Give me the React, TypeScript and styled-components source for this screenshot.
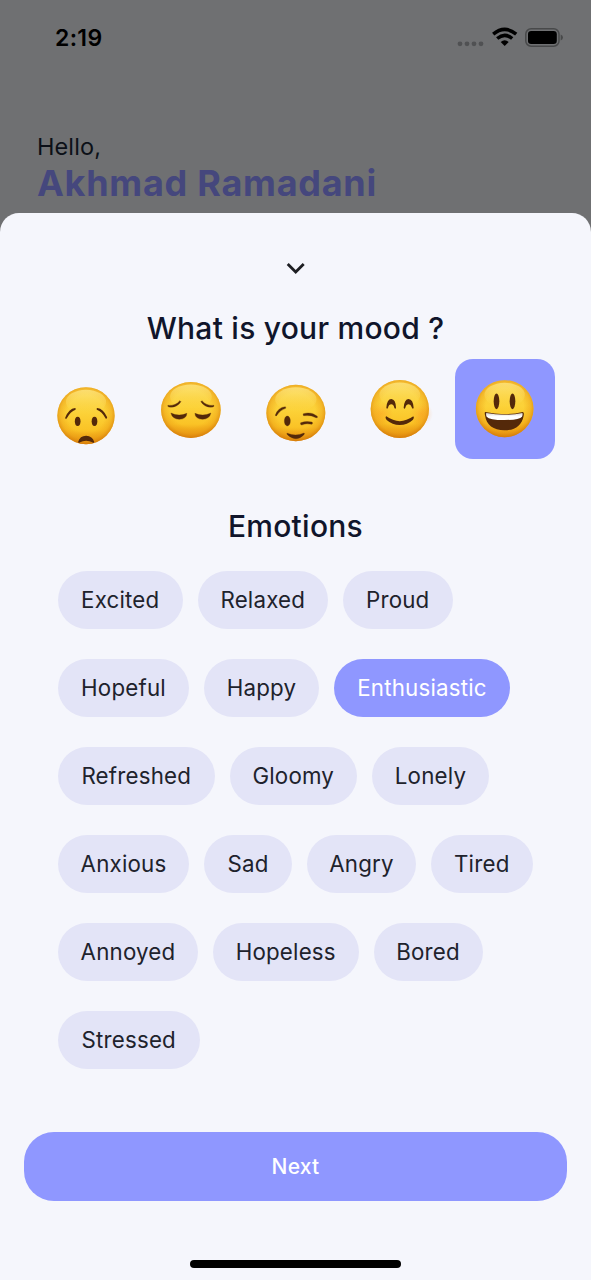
import React from "react";
import styled, { createGlobalStyle } from "styled-components";

const Global = createGlobalStyle`
  * { box-sizing: border-box; }
  body { margin: 0; background: #6f7072; font-family: Inter, "Liberation Sans", sans-serif; }
  button { font: inherit; border: 0; padding: 0; margin: 0; }
`;

const Screen = styled.main`
  width: 591px;
  height: 1280px;
  display: flex;
  flex-direction: column;
  overflow: hidden;
  background: #6f7072;
`;

const StatusBar = styled.header`
  height: 76px;
  padding: 0 28px 0 55px;
  display: flex;
  align-items: center;
  justify-content: space-between;
`;

const Clock = styled.span`
  font-size: 23px;
  font-weight: 600;
  letter-spacing: 0.35px;
  color: #000;
`;

const StatusIcons = styled.svg`
  display: block;
  width: 106px;
  height: 24px;
`;

const Greeting = styled.section`
  height: 137px;
  padding: 56px 37px 0;
`;

const Hello = styled.p`
  margin: 0;
  font-size: 23.5px;
  line-height: 29px;
  letter-spacing: 0.1px;
  color: #0c1018;
`;

const UserName = styled.h1`
  margin: 0;
  font-size: 36px;
  line-height: 44px;
  font-weight: 700;
  letter-spacing: 0.73px;
  color: #45477d;
`;

const Sheet = styled.section`
  flex: 1;
  display: flex;
  flex-direction: column;
  align-items: center;
  border-radius: 19px 19px 0 0;
  background: #f5f6fc;
`;

const CloseButton = styled.button`
  height: 30px;
  margin-top: 40px;
  background: none;
  svg { display: block; }
`;

const Title = styled.h2<{ $top: number }>`
  margin: ${(p) => p.$top}px 0 0;
  font-size: 30px;
  line-height: 40px;
  font-weight: 450;
  letter-spacing: 0.25px;
  color: #10152b;
`;

const MoodRow = styled.div`
  display: flex;
  gap: 4.6px;
  margin: 11px 0 0;
`;

const MoodCell = styled.button<{ $active?: boolean }>`
  width: 100px;
  height: 100px;
  border-radius: 18px;
  background: ${(p) => (p.$active ? "#8f97ff" : "transparent")};
  svg { display: block; width: 100px; height: 100px; }
`;

const Emotions = styled.div`
  align-self: stretch;
  display: flex;
  flex-direction: column;
  gap: 30px;
  margin: 25px 0 0 58px;
`;

const ChipRow = styled.div`
  display: flex;
  gap: 15px;
`;

const Chip = styled.button<{ $width: number; $active?: boolean }>`
  width: ${(p) => p.$width}px;
  height: 58px;
  padding-bottom: 2px;
  border-radius: 29px;
  font-size: 22.3px;
  letter-spacing: 0.2px;
  white-space: nowrap;
  color: ${(p) => (p.$active ? "#fff" : "#20222c")};
  background: ${(p) => (p.$active ? "#8f97ff" : "#e3e4f7")};
`;

const NextButton = styled.button`
  width: 543px;
  height: 68.5px;
  margin-top: 63px;
  border-radius: 30px;
  font-size: 21px;
  font-weight: 500;
  letter-spacing: 0.2px;
  color: #fff;
  background: #8f97ff;
`;

const HomeIndicator = styled.div`
  width: 211px;
  height: 8px;
  margin-top: 59.5px;
  border-radius: 4px;
  background: #000;
`;

const INK = "#54290a";

type FaceProps = { x: number; y: number; cx: number; cy: number; rx: number; ry: number; children: React.ReactNode };

function Face({ x, y, cx, cy, rx, ry, children }: FaceProps) {
  return (
    <svg viewBox="0 0 300 300" aria-hidden="true">
      <g transform={`translate(${x} ${y})`}>
        <ellipse cx={cx} cy={cy} rx={rx} ry={ry} fill="url(#skin)" />
        <ellipse cx={cx} cy={cy} rx={rx} ry={ry} fill="url(#rim)" />
        <ellipse cx={cx} cy={cy - ry * 0.48} rx={rx * 0.7} ry={ry * 0.43} fill="url(#shine)" />
        {children}
      </g>
    </svg>
  );
}

const Gradients = () => (
  <svg width="0" height="0" style={{ position: "absolute" }} aria-hidden="true">
    <defs>
      <linearGradient id="skin" x1="0" y1="0" x2="0" y2="1">
        <stop offset="0" stopColor="#f8cb3c" />
        <stop offset=".45" stopColor="#fcd238" />
        <stop offset=".75" stopColor="#fac326" />
        <stop offset="1" stopColor="#e48b0c" />
      </linearGradient>
      <radialGradient id="rim" cx=".5" cy=".47" r=".54">
        <stop offset=".6" stopColor="#ee9d12" stopOpacity="0" />
        <stop offset=".82" stopColor="#ea9a14" stopOpacity=".42" />
        <stop offset="1" stopColor="#cf7408" stopOpacity=".82" />
      </radialGradient>
      <linearGradient id="shine" x1="0" y1="0" x2="0" y2="1">
        <stop offset="0" stopColor="#ffec8d" stopOpacity=".7" />
        <stop offset="1" stopColor="#ffe25a" stopOpacity="0" />
      </linearGradient>
      <radialGradient id="blush">
        <stop offset="0" stopColor="#ff861c" stopOpacity=".32" />
        <stop offset="1" stopColor="#ff861c" stopOpacity="0" />
      </radialGradient>
      <linearGradient id="teeth" x1="0" y1="0" x2="0" y2="1">
        <stop offset="0" stopColor="#d9d4cd" />
        <stop offset=".5" stopColor="#fff" />
      </linearGradient>
      <clipPath id="worriedFace"><ellipse cx="124.5" cy="122" rx="86" ry="85.5" /></clipPath>
    </defs>
  </svg>
);

const Worried = () => (
  <Face x={25.5} y={48} cx={124.5} cy={122} rx={86} ry={85.5}>
    <g fill={INK}>
      <ellipse cx="99.500" cy="139" rx="8.500" ry="14" />
      <ellipse cx="150" cy="139" rx="8.500" ry="14" />
      <path d="M62 128Q73 101 92 99Q95 101 93 104Q78 109 66 131Q62 133 62 128Z" />
      <path d="M188 127Q177 101 158 99Q155 101 157 104Q172 109 184 131Q188 132 188 127Z" />
      <path clipPath="url(#worriedFace)" d="M101 200Q106 182 125 182Q144 183 149 200Q149 206 143 202Q136 197 125 197Q114 197 107 202Q101 206 101 200Z" />
    </g>
  </Face>
);

const Pensive = () => (
  <Face x={26.7} y={33} cx={123} cy={120} rx={89.500} ry={84}>
    <g fill={INK} stroke={INK} strokeWidth="1">
      <path d="M54 106Q77 108 90 92L93 95Q81 114 57 111Q52 109 54 106Z" />
      <path d="M192 106Q169 108 156 92L153 95Q165 114 189 111Q194 109 192 106Z" />
      <path d="M63 129Q87 141 111 130Q110 147 88 148Q67 147 63 129Z" />
      <path d="M135 130Q159 141 183 129Q179 147 158 148Q136 147 135 130Z" />
    </g>
  </Face>
);

const Wink = () => (
  <Face x={28} y={48} cx={121.500} cy={114} rx={88.500} ry={84.500}>
    <g fill={INK} stroke={INK} strokeWidth=".8">
      <ellipse cx="96" cy="138" rx="9" ry="15" />
      <path d="M60 120Q68 97 90 95Q92 97 91 100Q75 104 64 122Q60 124 60 120Z" />
      <path d="M144 116Q168 109 186 124Q188 130 182 128Q166 119 145 122Q142 121 144 116Z" />
      <path d="M136 143Q152 137 170 141Q174 144 170 148Q153 144 139 150Q133 148 136 143Z" />
      <path d="M96 175Q122 185 146 174Q149 175 146 179Q123 203 97 180Q92 174 96 175Z" />
    </g>
  </Face>
);

const Smiling = () => (
  <Face x={29} y={33} cx={120.500} cy={117} rx={87.500} ry={87}>
    <circle cx="66" cy="130" r="34" fill="url(#blush)" />
    <circle cx="184" cy="132" r="36" fill="url(#blush)" />
    <g fill={INK}>
      <path d="M80 113Q82 87 95 87Q108 88 109 113Q107 119 104 113Q101 103 95 103Q88 103 85 113Q82 119 80 113Z" />
      <path d="M132 113Q134 87 147 87Q160 88 162 113Q160 119 157 113Q153 103 147 103Q140 103 137 113Q134 119 132 113Z" />
      <path d="M80 139Q120 168 161 139Q165 143 160 149Q143 165 120 165Q98 165 81 150Q75 142 80 139Z" />
    </g>
  </Face>
);

const Grinning = () => (
  <Face x={-15} y={-12} cx={164} cy={161} rx={86.500} ry={85.500}>
    <g fill={INK}>
      <ellipse cx="139.500" cy="139" rx="8.500" ry="23.500" />
      <ellipse cx="187.500" cy="139" rx="8.500" ry="23.500" />
      <path d="M106 171Q163 184 218 171Q223 171 221 182C216 211 195 226 163 226C130 226 109 210 105 181Q103 171 106 171Z" />
    </g>
    <path fill="url(#teeth)" d="M109 174Q163 185 217 174Q219 178 216 185Q208 195 163 195Q118 195 110 185Q107 178 109 174Z" />
  </Face>
);

const moods = [
  { name: "Worried", Icon: Worried },
  { name: "Pensive", Icon: Pensive },
  { name: "Winking", Icon: Wink },
  { name: "Smiling", Icon: Smiling },
  { name: "Grinning", Icon: Grinning, active: true },
];

const emotionRows: [string, number][][] = [
  [["Excited", 124.5], ["Relaxed", 130.5], ["Proud", 109.5]],
  [["Hopeful", 131], ["Happy", 115], ["Enthusiastic", 176]],
  [["Refreshed", 156.5], ["Gloomy", 127.5], ["Lonely", 117]],
  [["Anxious", 131], ["Sad", 88], ["Angry", 109], ["Tired", 101.5]],
  [["Annoyed", 140], ["Hopeless", 145.5], ["Bored", 109]],
  [["Stressed", 141.5]],
];

export default function App() {
  return (
    <Screen>
      <Global />
      <Gradients />
      <StatusBar>
        <Clock>2:19</Clock>
        <StatusIcons viewBox="0 0 106 24">
          <g fill="#505153">
            <circle cx="3" cy="17.800" r="2.400" />
            <circle cx="10" cy="17.800" r="2.400" />
            <circle cx="17" cy="17.800" r="2.400" />
            <circle cx="24" cy="17.800" r="2.400" />
          </g>
          <g fill="none" stroke="#000" strokeWidth="3.500">
            <path d="M36.200 8.200Q47.700-1.400 59.200 8.200" />
            <path d="M40.200 12.500Q47.700 6.200 55.200 12.500" />
          </g>
          <path d="M43.700 15.900Q47.700 12.500 51.700 15.900L47.700 20.100Z" />
          <rect x="68.800" y="2.800" width="33.200" height="17.400" rx="5.300" fill="none" stroke="#48494a" strokeWidth="1.500" />
          <rect x="71" y="5" width="28.800" height="13" rx="3.200" />
          <path d="M103.700 8.500Q106 9.700 106 11.500Q106 13.300 103.700 14.500Z" fill="#48494a" />
        </StatusIcons>
      </StatusBar>
      <Greeting>
        <Hello>Hello,</Hello>
        <UserName>Akhmad Ramadani</UserName>
      </Greeting>
      <Sheet>
        <CloseButton aria-label="Close">
          <svg width="30" height="30" viewBox="0 0 30 30">
            <path d="M6.700 11L14.700 19L22.700 11" fill="none" stroke="#1d1e22" strokeWidth="2.800" />
          </svg>
        </CloseButton>
        <Title $top={25}>What is your mood ?</Title>
        <MoodRow>
          {moods.map(({ name, Icon, active }) => (
            <MoodCell key={name} aria-label={name} $active={active}>
              <Icon />
            </MoodCell>
          ))}
        </MoodRow>
        <Title $top={47}>Emotions</Title>
        <Emotions>
          {emotionRows.map((row) => (
            <ChipRow key={row[0][0]}>
              {row.map(([label, width]) => (
                <Chip key={label} $width={width} $active={label === "Enthusiastic"}>
                  {label}
                </Chip>
              ))}
            </ChipRow>
          ))}
        </Emotions>
        <NextButton>Next</NextButton>
        <HomeIndicator />
      </Sheet>
    </Screen>
  );
}
